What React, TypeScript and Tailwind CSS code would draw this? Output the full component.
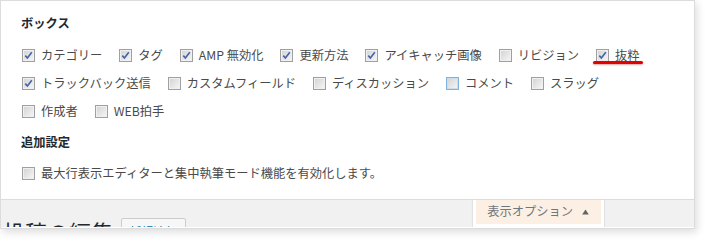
import React from 'react';

interface BoxOption {
  label: string;
  checked: boolean;
  focused?: boolean;
  marked?: boolean;
}

const rows: BoxOption[][] = [
  [
    { label: 'カテゴリー', checked: true },
    { label: 'タグ', checked: true },
    { label: 'AMP 無効化', checked: true },
    { label: '更新方法', checked: true },
    { label: 'アイキャッチ画像', checked: true },
    { label: 'リビジョン', checked: false },
    { label: '抜粋', checked: true, marked: true },
  ],
  [
    { label: 'トラックバック送信', checked: true },
    { label: 'カスタムフィールド', checked: false },
    { label: 'ディスカッション', checked: false },
    { label: 'コメント', checked: false, focused: true },
    { label: 'スラッグ', checked: false },
  ],
  [
    { label: '作成者', checked: false },
    { label: 'WEB拍手', checked: false },
  ],
];

function Checkbox({ checked, focused }: { checked: boolean; focused?: boolean }) {
  return (
    <span
      className={
        'flex h-[13px] w-[13px] shrink-0 items-center justify-center border bg-gradient-to-br from-[#d2d2d2] to-[#f7f7f7] ' +
        (focused ? 'border-[#7fb2dc] shadow-[inset_0_0_0_1px_#c9def0]' : 'border-[#a0a0a0] shadow-[inset_0_0_0_1px_#f0f0f0]')
      }
    >
      {checked && (
        <svg width="9" height="9" viewBox="0 0 9 9">
          <path d="M1.3 4.6 L3.4 7 L7.8 1.3" fill="none" stroke="#4262a8" strokeWidth="1.6" />
        </svg>
      )}
    </span>
  );
}

function Option({ option }: { option: BoxOption }) {
  return (
    <label className="relative flex h-full items-center gap-[6px]">
      <Checkbox checked={option.checked} focused={option.focused} />
      <span className="whitespace-nowrap">{option.label}</span>
      {option.marked && (
        <span className="absolute -left-[3px] -right-[3px] top-[20px] h-[3px] rounded-full bg-[#e60000] shadow-[0_1px_2px_rgba(120,0,0,0.35)]" />
      )}
    </label>
  );
}

export default function App() {
  return (
    <div
      className="h-[244px] w-[710px] overflow-hidden bg-white text-[12.25px] text-[#4a4a4a]"
      style={{ fontFamily: '"Noto Sans CJK JP", "Noto Sans", sans-serif' }}
    >
      <div className="h-[229px] w-[695px] border border-[#dcdcdc] shadow-[2px_3px_8px_rgba(0,0,0,0.14)]">
        {/* Screen options panel */}
        <div className="border-b border-[#dcdcdc] bg-white pb-[12px] pl-[20px] pt-[13px]">
          <h5 className="text-[12.25px] font-bold leading-[19px] text-[#23282d]">ボックス</h5>
          <div className="mt-[8px] pl-px">
            {rows.map((row, i) => (
              <div key={i} className="flex h-[28px] items-center gap-[17px]">
                {row.map(option => (
                  <Option key={option.label} option={option} />
                ))}
              </div>
            ))}
          </div>
          <h5 className="mt-2 text-[12.25px] font-bold leading-[19px] text-[#23282d]">追加設定</h5>
          <div className="mt-[7px] flex h-[28px] items-center pl-px">
            <Option option={{ label: '最大行表示エディターと集中執筆モード機能を有効化します。', checked: false }} />
          </div>
        </div>

        {/* Page header area */}
        <div className="flex h-[27px] items-start overflow-hidden bg-[#f1f1f1]">
          <h1 className="mt-[17px] whitespace-nowrap pl-[2px] text-[22px] leading-[29px] text-[#23282d]">投稿の編集</h1>
          <span className="ml-[8px] mt-[18px] whitespace-nowrap rounded-[2px] border border-[#ccc] bg-[#f7f7f7] px-[7px] py-[4px] leading-[18px] text-[#0073aa]">
            新規追加
          </span>
          <div className="ml-auto mr-[89px] -mt-[3px] border-x border-b border-[#e2e2e2] bg-white px-[3px] pb-[3px] shadow-[0_1px_1px_rgba(0,0,0,0.05)]">
            <div className="flex h-[27px] items-center gap-[9px] bg-[#fcefe3] pl-[11px] pr-[12px] pt-[2px] text-[#72777c]">
              <span className="whitespace-nowrap">表示オプション</span>
              <svg width="7" height="6" viewBox="0 0 7 6">
                <path d="M3.5 0.5 L6.8 5.5 L0.2 5.5 Z" fill="#60656a" />
              </svg>
            </div>
          </div>
        </div>
      </div>
    </div>
  );
}
